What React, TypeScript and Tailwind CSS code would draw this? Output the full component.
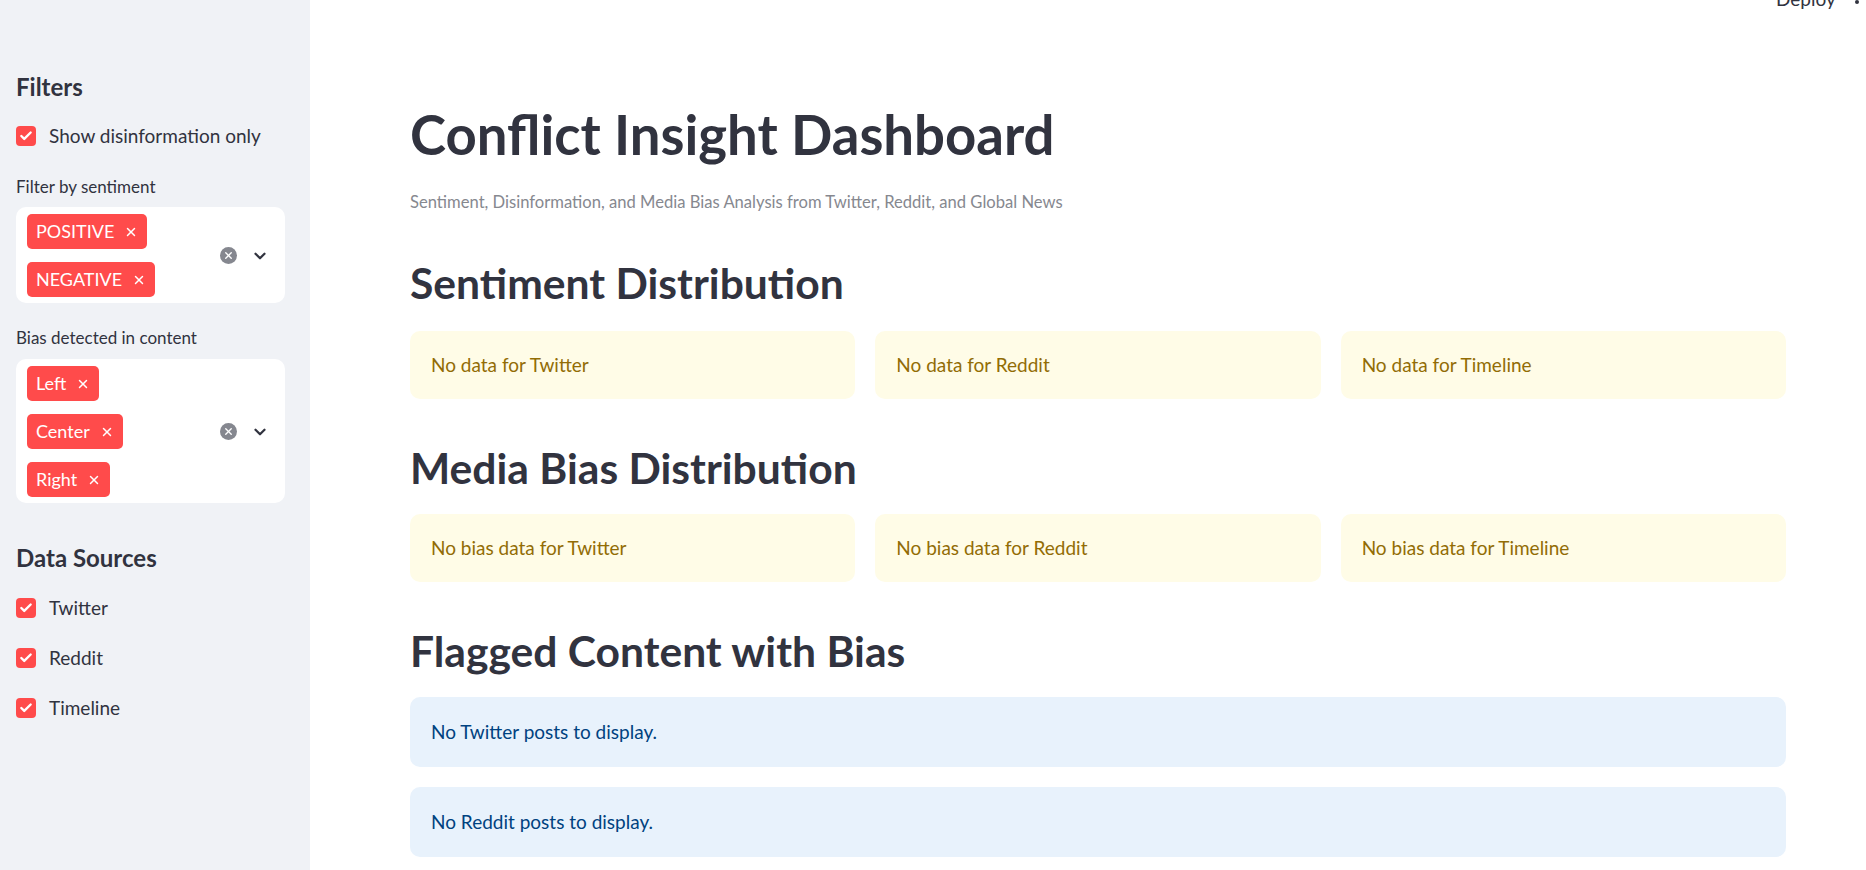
import { Check, X, ChevronDown } from 'lucide-react'

const FONT = { fontFamily: 'Lato, "Noto Sans", sans-serif' }

function Checkbox({ label }: { label: string }) {
  return (
    <div className="flex items-center h-6 gap-[13px]">
      <span className="w-5 h-5 rounded-[4px] bg-[#ff4b4b] flex items-center justify-center">
        <Check className="w-[14px] h-[14px] text-white" strokeWidth={4} />
      </span>
      <span className="text-[19px] text-[#31333f] leading-6">{label}</span>
    </div>
  )
}

function Tag({ label }: { label: string }) {
  return (
    <span className="inline-flex items-center h-[35px] bg-[#ff4b4b] text-white rounded-[5px] pl-[9px] pr-[9px] gap-[10px] text-[18px] self-start">
      {label}
      <X className="w-[14px] h-[14px]" strokeWidth={2.5} />
    </span>
  )
}

function MultiSelect({ tags }: { tags: string[] }) {
  return (
    <div className="bg-white rounded-[10px] flex items-center pl-[11px] pr-[16px] pt-[7px] pb-[6px]">
      <div className="flex flex-col gap-[13px] flex-1">
        {tags.map(t => <Tag key={t} label={t} />)}
      </div>
      <div className="flex items-center gap-[14px]">
        <span className="w-[17px] h-[17px] rounded-full bg-[#85878f] flex items-center justify-center">
          <X className="w-[11px] h-[11px] text-white" strokeWidth={3} />
        </span>
        <ChevronDown className="w-[18px] h-[18px] text-[#31333f]" strokeWidth={3} />
      </div>
    </div>
  )
}

function Alert({ text, tone }: { text: string; tone: 'warn' | 'info' }) {
  const cls = tone === 'warn'
    ? 'bg-[#fffce7] text-[#926c05] h-[68px]'
    : 'bg-[#e8f2fc] text-[#004280] h-[70px]'
  return (
    <div className={`rounded-[10px] px-[21px] flex items-center text-[19px] ${cls}`}>
      {text}
    </div>
  )
}

function H2({ children, className = '' }: { children: string; className?: string }) {
  return <h2 className={`text-[42.6px] font-bold leading-[54px] text-[#31333f] ${className}`}>{children}</h2>
}

export default function App() {
  return (
    <div className="flex min-h-[870px] w-full bg-white relative overflow-hidden" style={FONT}>
      {/* Sidebar */}
      <aside className="w-[310px] shrink-0 bg-[#f0f2f6] pl-4 pr-[25px] pt-[72px]">
        <h3 className="text-[24px] font-bold leading-[30px] text-[#31333f]">Filters</h3>
        <div className="mt-[22px]">
          <Checkbox label="Show disinformation only" />
        </div>
        <p className="mt-[28px] text-[17px] leading-[22px] text-[#31333f]">Filter by sentiment</p>
        <div className="mt-[9px]">
          <MultiSelect tags={['POSITIVE', 'NEGATIVE']} />
        </div>
        <p className="mt-[24px] text-[17px] leading-[22px] text-[#31333f]">Bias detected in content</p>
        <div className="mt-[10px]">
          <MultiSelect tags={['Left', 'Center', 'Right']} />
        </div>
        <h3 className="mt-[40px] text-[24px] font-bold leading-[30px] text-[#31333f]">Data Sources</h3>
        <div className="mt-[23px] flex flex-col gap-[26px]">
          <Checkbox label="Twitter" />
          <Checkbox label="Reddit" />
          <Checkbox label="Timeline" />
        </div>
      </aside>

      {/* Main */}
      <main className="flex-1 pl-[100px] pr-[80px] pt-[101px]">
        <h1 className="text-[54.5px] font-bold leading-[66px] text-[#31333f]">Conflict Insight Dashboard</h1>
        <p className="mt-[23px] text-[16.6px] leading-6 text-[#86888f]">
          Sentiment, Disinformation, and Media Bias Analysis from Twitter, Reddit, and Global News
        </p>

        <H2 className="mt-[42px]">Sentiment Distribution</H2>
        <div className="mt-[21px] grid grid-cols-3 gap-5">
          <Alert tone="warn" text="No data for Twitter" />
          <Alert tone="warn" text="No data for Reddit" />
          <Alert tone="warn" text="No data for Timeline" />
        </div>

        <H2 className="mt-[42px]">Media Bias Distribution</H2>
        <div className="mt-[19px] grid grid-cols-3 gap-5">
          <Alert tone="warn" text="No bias data for Twitter" />
          <Alert tone="warn" text="No bias data for Reddit" />
          <Alert tone="warn" text="No bias data for Timeline" />
        </div>

        <H2 className="mt-[42px]">Flagged Content with Bias</H2>
        <div className="mt-[19px] flex flex-col gap-5">
          <Alert tone="info" text="No Twitter posts to display." />
          <Alert tone="info" text="No Reddit posts to display." />
        </div>
      </main>

      {/* header peeking */}
      <div className="absolute top-[-15px] left-[1776px] text-[19px] text-[#31333f]">Deploy</div>
      <div className="absolute top-0 left-[1855px] w-[4px] h-[4px] rounded-full bg-[#31333f]" />
    </div>
  )
}
